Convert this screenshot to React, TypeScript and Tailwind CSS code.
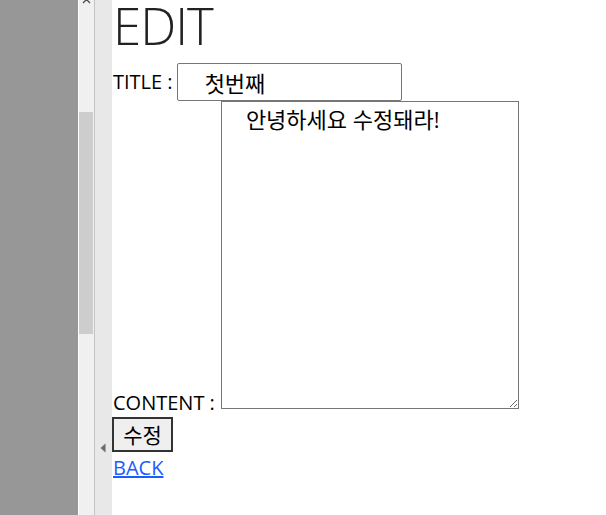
import React from 'react'

const font = { fontFamily: '"Open Sans", "Noto Sans CJK KR", sans-serif' }

function SideBars() {
  return (
    <div className="flex h-[515px] shrink-0">
      <div className="w-[78px] bg-[#979797]" />
      <div className="w-px bg-white" />
      <div className="relative w-[15px] bg-[#f0f0f0]">
        <svg className="absolute left-[3px] top-[-3px]" width="9" height="8" viewBox="0 0 9 8">
          <path d="M1 6 L4.5 2.5 L8 6" stroke="#505050" strokeWidth="1.4" fill="none" />
        </svg>
        <div className="absolute left-0 top-[112px] h-[222px] w-[14px] bg-[#cdcdcd]" />
      </div>
      <div className="w-px bg-[#c4c4c4]" />
      <div className="relative w-[17px] bg-[#e8e8e8]">
        <svg className="absolute left-[5px] top-[443px]" width="6" height="10" viewBox="0 0 6 10">
          <path d="M5.5 0.5 L0.5 5 L5.5 9.5 Z" fill="#6b6b6b" />
        </svg>
      </div>
    </div>
  )
}

export default function App() {
  return (
    <div className="flex h-[515px] w-[606px] overflow-hidden bg-white" style={font}>
      <SideBars />
      <div className="flex flex-col text-[20px] text-black">
        <h1 className="mb-[7px] ml-px h-[56px] text-[51px] font-light leading-[50px] tracking-[-1px] text-[#222]">EDIT</h1>
        <div className="flex items-center">
          <label className="ml-px mr-[4px] leading-[24px]">TITLE :</label>
          <input
            defaultValue="첫번째"
            className="h-[38px] w-[225px] rounded-[2px] border border-[#767676] pl-[27px] text-[22px] outline-none"
          />
        </div>
        <div className="flex items-end">
          <label className="ml-px mr-[6px] mb-[-6px] leading-[24px]">CONTENT :</label>
          <textarea
            defaultValue="안녕하세요 수정돼라!"
            className="h-[308px] w-[298px] border border-[#767676] px-[24px] pt-[2px] text-[22px] leading-[30px] outline-none"
          />
        </div>
        <div className="mt-[8px]">
          <button className="h-[35px] w-[61px] border-2 border-[#333] bg-[#efefef] text-[21px] leading-[24px]">수정</button>
        </div>
        <a href="#" className="mt-[3px] ml-px w-fit text-[20px] leading-[26px] text-[#1a5cff] underline">BACK</a>
      </div>
    </div>
  )
}
